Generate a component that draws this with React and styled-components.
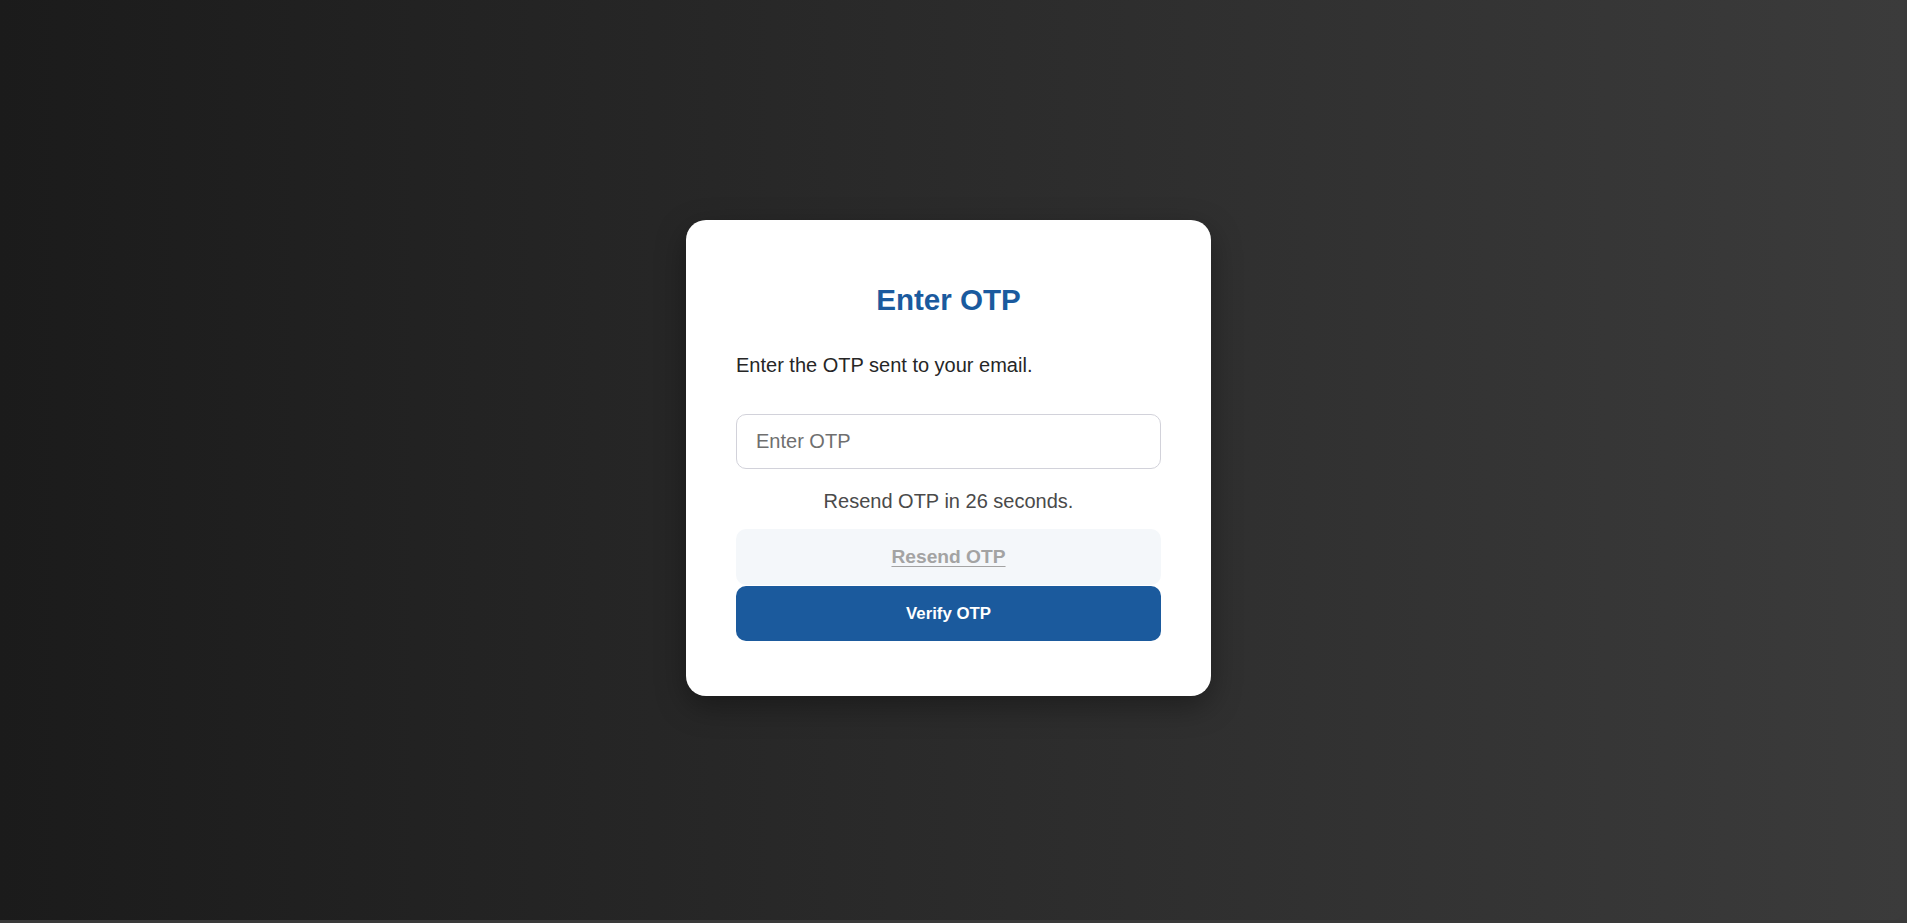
import React, { useState } from "react";
import styled, { createGlobalStyle } from "styled-components";

const GlobalStyle = createGlobalStyle`
    html, body {
        margin: 0;
        padding: 0;
        background: #3a3a3a;
        font-family: "Liberation Sans", Arial, sans-serif;
    }
    * { box-sizing: border-box; }
`;

const Screen = styled.div`
    width: calc(100% - 3px);
    height: 920px;
    padding: 0 7px 4px 0;
    display: flex;
    justify-content: center;
    align-items: center;
    background: linear-gradient(to right, #1b1b1b, #3b3b3b);
    border-radius: 0 0 12px 0;
`;

const Card = styled.div`
    width: 525px;
    padding: 63px 50px 55px;
    background: #ffffff;
    border-radius: 20px;
    box-shadow: 0 10px 30px rgba(0, 0, 0, 0.35);
    display: flex;
    flex-direction: column;
`;

const Title = styled.h2`
    margin: 0;
    font-size: 29.6px;
    line-height: 33px;
    font-weight: 700;
    text-align: center;
    color: #1a5a9e;
`;

const Hint = styled.p`
    margin: 38px 0 0;
    font-size: 20px;
    line-height: 22px;
    color: #262626;
`;

const OtpInput = styled.input`
    margin-top: 38px;
    width: 100%;
    height: 55px;
    padding: 0 19px;
    border: 1px solid #d2d2da;
    border-radius: 10px;
    font-family: inherit;
    font-size: 20px;
    color: #222;
    outline: none;

    &::placeholder {
        color: #6f6f6f;
    }
`;

const Timer = styled.p`
    margin: 21px 0 0;
    font-size: 20px;
    line-height: 22px;
    text-align: center;
    color: #4a4a4a;
`;

const Button = styled.button`
    width: 100%;
    height: ${p => (p.$ghost ? "56px" : "55px")};
    margin-top: ${p => (p.$ghost ? "17px" : "1px")};
    border: none;
    border-radius: 10px;
    font-family: inherit;
    font-weight: 700;
    font-size: ${p => (p.$ghost ? "19.2px" : "16.8px")};
    color: ${p => (p.$ghost ? "#a3a3a3" : "#ffffff")};
    background: ${p => (p.$ghost ? "#f4f7fa" : "#1b5a9d")};
    text-decoration: ${p => (p.$ghost ? "underline" : "none")};
    text-underline-offset: 3px;
    cursor: ${p => (p.$ghost ? "not-allowed" : "pointer")};
`;

export default function App() {
    const [otp, setOtp] = useState("");
    const seconds = 26;

    return (
        <>
            <GlobalStyle />
            <Screen>
                <Card>
                    <Title>Enter OTP</Title>
                    <Hint>Enter the OTP sent to your email.</Hint>
                    <OtpInput
                        type="text"
                        placeholder="Enter OTP"
                        value={otp}
                        onChange={e => setOtp(e.target.value)}
                    />
                    <Timer>Resend OTP in {seconds} seconds.</Timer>
                    <Button $ghost disabled>Resend OTP</Button>
                    <Button>Verify OTP</Button>
                </Card>
            </Screen>
        </>
    );
}
